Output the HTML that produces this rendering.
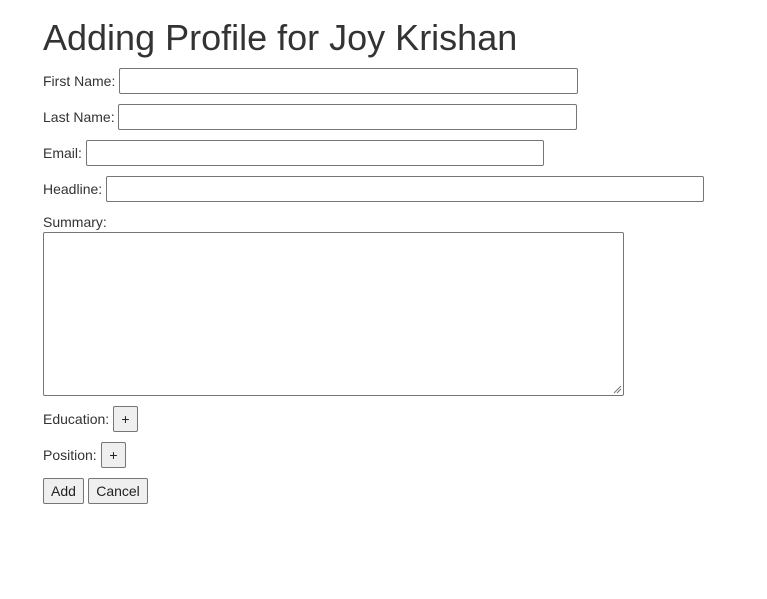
<!DOCTYPE html>
<html><head><style>
body{margin:0;background:#fff;font-family:"Liberation Sans",Arial,sans-serif;color:#333;width:767px;height:599px;position:relative;overflow:hidden}
h1{position:absolute;left:43px;top:16px;margin:0;font-size:36px;font-weight:normal;line-height:44px;color:#333}
.l{position:absolute;font-size:14px;line-height:16px;color:#333}
.i{position:absolute;box-sizing:border-box;border:1px solid #767676;border-radius:2px;height:26px;background:#fff}
.b{position:absolute;box-sizing:border-box;border:1px solid #767676;border-radius:2px;height:26px;background:#efefef;font-size:14px;line-height:24px;text-align:center;color:#222}
.grip{position:absolute;right:1px;bottom:1px}
</style></head><body>
<h1>Adding Profile for Joy Krishan</h1>
<div class="l" style="left:43px;top:73px">First Name:</div>
<div class="i" style="left:119px;top:68px;width:459px"></div>
<div class="l" style="left:43px;top:109px">Last Name:</div>
<div class="i" style="left:118px;top:104px;width:459px"></div>
<div class="l" style="left:43px;top:145px">Email:</div>
<div class="i" style="left:86px;top:140px;width:458px"></div>
<div class="l" style="left:43px;top:181px">Headline:</div>
<div class="i" style="left:106px;top:176px;width:598px"></div>
<div class="l" style="left:43px;top:214px">Summary:</div>
<div class="i" style="left:43px;top:232px;width:581px;height:164px">
<svg class="grip" width="9" height="9" viewBox="0 0 9 9"><path d="M1 8L8 1M4 8L8 4" stroke="#777" stroke-width="1"/></svg></div>
<div class="l" style="left:43px;top:411px">Education:</div>
<div class="b" style="left:113px;top:406px;width:25px">+</div>
<div class="l" style="left:43px;top:447px">Position:</div>
<div class="b" style="left:101px;top:442px;width:25px">+</div>
<div class="b" style="left:43px;top:478px;width:41px">Add</div>
<div class="b" style="left:88px;top:478px;width:60px">Cancel</div>
</body></html>
